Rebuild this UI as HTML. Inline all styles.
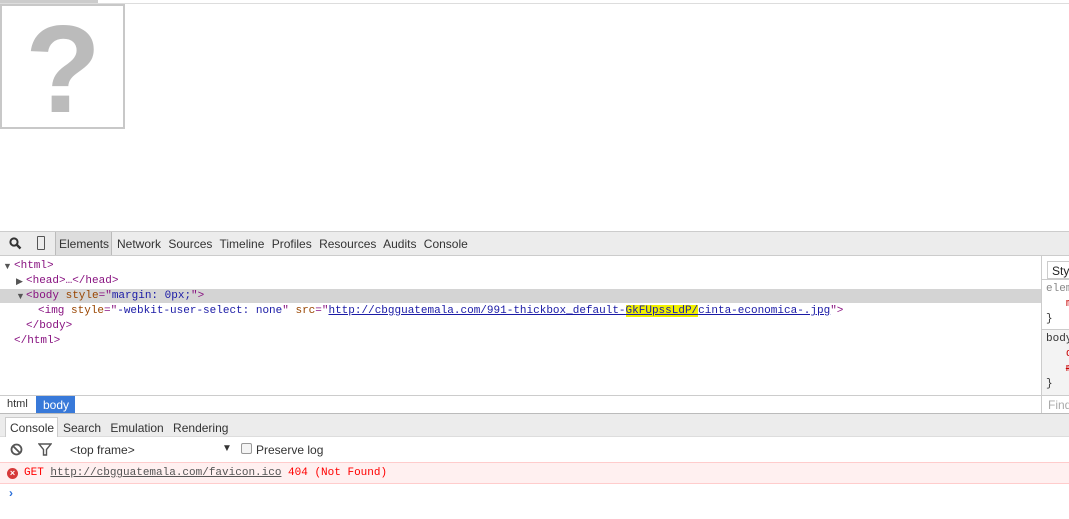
<!DOCTYPE html>
<html><head><style>
*{margin:0;padding:0;box-sizing:border-box}
body{width:1069px;height:519px;position:relative;background:#fff;overflow:hidden;font-family:"Liberation Sans",sans-serif;font-size:12px;color:#222}
.a{position:absolute}
.m{font-family:"Liberation Mono",monospace;font-size:11px;white-space:pre;line-height:15px}
.tag{color:#881280}.at{color:#994500}.av{color:#1a1aa6}.ln{color:#1a1aa6;text-decoration:underline}
.tri{position:absolute;font-size:9px;color:#555}
</style></head><body>
<div class="a" style="left:0;top:0;width:98px;height:3px;background:#ccc"></div>
<div class="a" style="left:0;top:3px;width:1069px;height:1px;background:#ddd"></div>
<div class="a" style="left:0;top:4px;width:125px;height:125px;border:2px solid #c8c8c8;background:#fff"></div>
<div class="a" style="left:22px;top:8px;width:82px;text-align:center;font:bold 124px/124px 'Liberation Sans',sans-serif;color:#bbb">?</div>

<div class="a" style="left:0;top:231px;width:1069px;height:25px;background:#ececec;border-top:1px solid #ccc;border-bottom:1px solid #ccc"></div>
<svg class="a" style="left:9px;top:237px" width="13" height="13" viewBox="0 0 13 13"><circle cx="5" cy="5" r="3.6" fill="none" stroke="#333" stroke-width="2"/><path d="M7.5 7.5L11.5 11.5" stroke="#333" stroke-width="2.4"/></svg>
<div class="a" style="left:37px;top:236px;width:8px;height:14px;border:1px solid #555;border-radius:1px"></div>
<div class="a" style="left:55px;top:232px;width:57px;height:23px;background:#ddd;border-left:1px solid #bbb;border-right:1px solid #bbb"></div>
<div class="a" style="left:59px;top:237px;color:#333">Elements</div>
<div class="a" style="left:117px;top:237px;color:#333;word-spacing:4px">Network Sources Timeline Profiles Resources Audits Console</div>

<div class="a" style="left:0;top:289px;width:1041px;height:14px;background:#d4d4d4"></div>
<span class="tri" style="left:3px;top:261px">▼</span>
<span class="tri" style="left:16px;top:276px">▶</span>
<span class="tri" style="left:16px;top:291px">▼</span>
<div class="a m" style="left:14px;top:259px"><span class="tag">&lt;html&gt;</span></div>
<div class="a m" style="left:26px;top:274px"><span class="tag">&lt;head&gt;…&lt;/head&gt;</span></div>
<div class="a m" style="left:26px;top:289px"><span class="tag">&lt;body </span><span class="at">style</span><span class="tag">="</span><span class="av">margin: 0px;</span><span class="tag">"&gt;</span></div>
<div class="a m" style="left:38px;top:304px"><span class="tag">&lt;img </span><span class="at">style</span><span class="tag">="</span><span class="av">-webkit-user-select: none</span><span class="tag">" </span><span class="at">src</span><span class="tag">="</span><span class="ln">http://cbgguatemala.com/991-thickbox_default-<span style="background:#f0f000">GkFUpssLdP/</span>cinta-economica-.jpg</span><span class="tag">"&gt;</span></div>
<div class="a m" style="left:26px;top:319px"><span class="tag">&lt;/body&gt;</span></div>
<div class="a m" style="left:14px;top:334px"><span class="tag">&lt;/html&gt;</span></div>

<div class="a" style="left:1041px;top:256px;width:28px;height:139px;border-left:1px solid #ccc;background:#fff"></div>
<div class="a" style="left:1047px;top:261px;width:22px;height:18px;border:1px solid #ccc;border-right:none;padding:2px 4px;font-size:12px">Sty</div>
<div class="a" style="left:1042px;top:279px;width:27px;height:47px;border-top:1px solid #ccc;background:#fff"></div>
<div class="a m" style="left:1046px;top:282px;color:#888">elem
   <span style="color:#c80000">m</span>
<span style="color:#333">}</span></div>
<div class="a" style="left:1042px;top:329px;width:27px;height:66px;border-top:1px solid #ccc;background:#f3f3f3"></div>
<div class="a m" style="left:1046px;top:332px;color:#333">body
   <span style="color:#c80000">d</span>
   <span style="color:#c80000;text-decoration:line-through">m</span>
}</div>

<div class="a" style="left:0;top:395px;width:1069px;height:1px;background:#ccc"></div>
<div class="a" style="left:1041px;top:396px;width:1px;height:18px;background:#ccc"></div>
<div class="a" style="left:1048px;top:398px;color:#aaa">Find</div>
<div class="a" style="left:7px;top:398px;color:#333;font-size:11px">html</div>
<div class="a" style="left:36px;top:396px;width:39px;height:17px;background:#3879d9;color:#fff;font-size:12px;padding:2px 0 0 7px">body</div>

<div class="a" style="left:0;top:413px;width:1069px;height:24px;background:#ececec;border-top:1px solid #bbb;border-bottom:1px solid #ddd"></div>
<div class="a" style="left:5px;top:417px;width:53px;height:20px;background:#fff;border:1px solid #ccc;border-bottom:none"></div>
<div class="a" style="left:10px;top:421px;color:#333">Console</div>
<div class="a" style="left:63px;top:421px;color:#333;word-spacing:6px">Search Emulation Rendering</div>

<svg class="a" style="left:10px;top:443px" width="13" height="13" viewBox="0 0 13 13"><circle cx="6.5" cy="6.5" r="5" fill="none" stroke="#555" stroke-width="1.8"/><path d="M3 3L10 10" stroke="#555" stroke-width="1.8"/></svg>
<svg class="a" style="left:38px;top:443px" width="14" height="13" viewBox="0 0 14 13"><path d="M1 1H13L8.5 6.5V12H5.5V6.5Z" fill="none" stroke="#555" stroke-width="1.4"/></svg>
<div class="a" style="left:70px;top:443px;color:#333">&lt;top frame&gt;</div>
<div class="a" style="left:222px;top:443px;color:#333;font-size:10px">▼</div>
<div class="a" style="left:241px;top:443px;width:11px;height:11px;border:1px solid #999;border-radius:2px;background:#f4f4f4"></div>
<div class="a" style="left:256px;top:443px;color:#333">Preserve log</div>

<div class="a" style="left:0;top:462px;width:1069px;height:22px;background:#fff0f0;border-top:1px solid #fcc;border-bottom:1px solid #fcc"></div>
<div class="a" style="left:7px;top:468px;width:11px;height:11px;border-radius:50%;background:#d63a3a;color:#fff;font-size:9px;line-height:11px;text-align:center;font-weight:bold">×</div>
<div class="a m" style="left:24px;top:466px;color:#f00">GET <span style="color:#555;text-decoration:underline">http://cbgguatemala.com/favicon.ico</span> 404 (Not Found)</div>
<div class="a" style="left:9px;top:486px;color:#2b6fd9;font-weight:bold;font-size:12px">›</div>
</body></html>
